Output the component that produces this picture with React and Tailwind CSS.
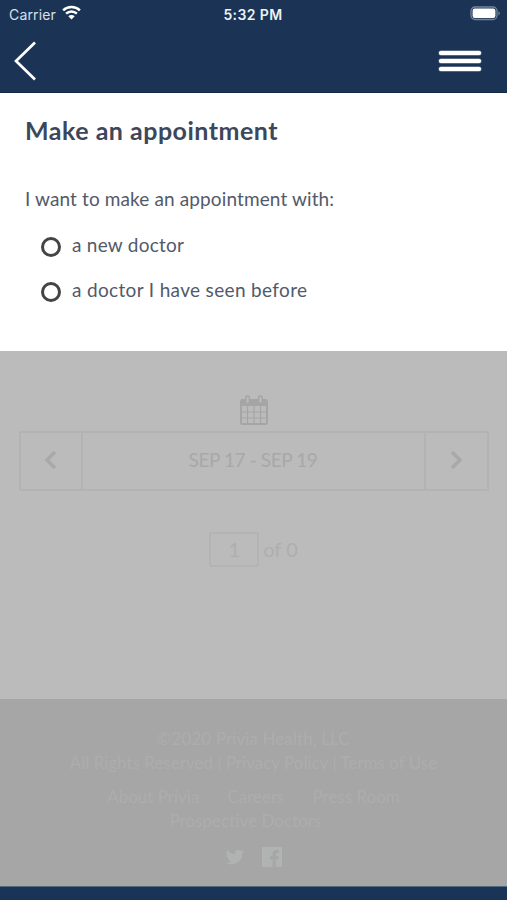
import React from "react";

function StatusBar() {
  return (
    <div className="flex h-7 items-center justify-between pl-[9px] pr-[6px] font-['Inter',sans-serif] text-white">
      <div className="flex w-[176px] items-center gap-[6px] text-[14px] text-[#d9e0ea]">
        <span className="tracking-[0.15px]">Carrier</span>
        <svg className="-mt-[3px]" width="19" height="15" viewBox="0 0 19 15" fill="none" stroke="#fff" strokeWidth="2.5">
          <path d="M1.1 5.4a12.2 12.2 0 0 1 16.8 0" />
          <path d="M4.1 8.6a7.8 7.8 0 0 1 10.8 0" />
          <path d="M6.3 11.3a4.6 4.6 0 0 1 6.4 0L9.5 14.6Z" fill="#fff" stroke="none" />
        </svg>
      </div>
      <span className="text-[14px] font-semibold tracking-[0.4px] text-[#edf1f6]">5:32 PM</span>
      <div className="flex w-[180px] justify-end">
        <svg width="31" height="16" viewBox="0 0 31 16">
          <rect x="1" y="1" width="26" height="12.5" rx="4" fill="none" stroke="#74839b" strokeWidth="1.3" />
          <rect x="2.6" y="2.6" width="22.8" height="9.4" rx="2.2" fill="#fff" />
          <path d="M28.4 5.2c2 .8 2 3.4 0 4.2z" fill="#74839b" />
        </svg>
      </div>
    </div>
  );
}

function Option({ label, className }) {
  return (
    <div className="flex h-[45px] items-center">
      <span className="mt-[2px] h-5 w-5 rounded-full border-[3px] border-[#464343]" />
      <span className={"ml-[11px] whitespace-nowrap text-[19px] " + className}>{label}</span>
    </div>
  );
}

function Calendar() {
  return (
    <svg width="28" height="30" viewBox="0 0 28 30" fill="none" stroke="#a5a5a5">
      <rect x="1" y="5" width="26" height="24" rx="1.5" strokeWidth="2" />
      <path d="M1 5h26v6H1z" fill="#a5a5a5" stroke="none" />
      <path d="M1 17h26M1 23h26M7.5 11v18M14 11v18M20.5 11v18" strokeWidth="1.2" />
      <rect x="5.8" y="1" width="3.6" height="7.5" rx="1.8" fill="#bbb" strokeWidth="1.5" />
      <rect x="18.6" y="1" width="3.6" height="7.5" rx="1.8" fill="#bbb" strokeWidth="1.5" />
    </svg>
  );
}

export default function App() {
  return (
    <div className="flex h-[900px] w-[507px] flex-col overflow-hidden bg-[#1b3455] font-['Lato',sans-serif]">
      <header className="h-[93px] shrink-0 border-b border-[#142947]">
        <StatusBar />
        <div className="flex h-16 items-start justify-between pl-[14px] pr-[26px]">
          <svg className="mt-[13px]" width="23" height="40" viewBox="0 0 23 40" fill="none" stroke="#fff" strokeWidth="2.7">
            <path d="M21 1.5 2 20l19 18.5" />
          </svg>
          <div className="mt-[23px] flex w-[42px] flex-col gap-[4px]">
            <span className="h-[4px] rounded-[2px] bg-white ring-[0.5px] ring-white/50" />
            <span className="h-[4px] rounded-[2px] bg-white ring-[0.5px] ring-white/50" />
            <span className="h-[4px] rounded-[2px] bg-white ring-[0.5px] ring-white/50" />
          </div>
        </div>
      </header>

      <main className="h-[258px] shrink-0 bg-white px-[25px] pt-[19px] text-[#525a6a]">
        <h1 className="h-9 whitespace-nowrap text-[25px] font-bold leading-9 tracking-[0.5px] text-[#3d475c]">Make an appointment</h1>
        <p className="mt-[37px] h-7 whitespace-nowrap text-[19px] leading-7 tracking-[0.12px]">I want to make an appointment with:</p>
        <div className="ml-[16px] mt-[10px]">
          <Option label="a new doctor" className="tracking-[0.25px]" />
          <Option label="a doctor I have seen before" className="tracking-[0.34px]" />
        </div>
      </main>

      <section className="flex h-[348px] shrink-0 flex-col items-center bg-[#bbbbbb] pt-[44px] text-[#aeaeae]">
        <Calendar />
        <div className="mt-[6px] flex h-[60px] w-[470px] border-2 border-[#b3b3b3]">
          <div className="flex w-[62px] items-center justify-center border-r-2 border-[#b3b3b3] pb-[3px]">
            <svg width="12" height="18" viewBox="0 0 12 18" fill="none" stroke="#a9a9a9" strokeWidth="3.5"><path d="m10 1-8 8 8 8" /></svg>
          </div>
          <div className="flex flex-1 items-center justify-center whitespace-nowrap pb-[2px] text-[19px] tracking-[-0.4px] text-[#a8a8a8]">SEP 17 - SEP 19</div>
          <div className="flex w-[63px] items-center justify-center border-l-2 border-[#b3b3b3] pb-[3px]">
            <svg width="12" height="18" viewBox="0 0 12 18" fill="none" stroke="#a9a9a9" strokeWidth="3.5"><path d="m2 1 8 8-8 8" /></svg>
          </div>
        </div>
        <div className="mt-[40px] flex h-9 items-center gap-1 text-[20px]">
          <span className="flex h-[35px] w-[50px] items-center justify-center rounded-[2px] border-2 border-[#b4b4b4]">1</span>
          <span>of 0</span>
        </div>
      </section>

      <footer className="flex h-[187px] shrink-0 flex-col items-center bg-[#a6a6a6] pt-[28px] text-[17px] leading-[23.5px] text-[#adadad]">
        <div className="whitespace-nowrap tracking-[0.1px]">©2020 Privia Health, LLC</div>
        <div className="whitespace-nowrap">All Rights Reserved | Privacy Policy | Terms of Use</div>
        <div className="mt-[11px] flex gap-[28px] whitespace-nowrap"><span>About Privia</span><span>Careers</span><span>Press Room</span></div>
        <div className="mr-[16px] whitespace-nowrap">Prospective Doctors</div>
        <div className="mt-[15px] flex items-center gap-[18px] text-[#b1b3b3]">
          <svg width="18" height="18" viewBox="0 0 24 24" fill="currentColor">
            <path d="M23.9 4.6c-.9.4-1.8.7-2.8.8a4.9 4.9 0 0 0 2.1-2.7 9.8 9.8 0 0 1-3.1 1.2A4.9 4.9 0 0 0 11.7 8 14 14 0 0 1 1.6 3.1a4.9 4.9 0 0 0 1.6 6.6A4.9 4.9 0 0 1 .9 9.1v.1a4.9 4.9 0 0 0 4 4.8 4.9 4.9 0 0 1-2.2.1 4.9 4.9 0 0 0 4.6 3.4A9.9 9.9 0 0 1 0 19.5a14 14 0 0 0 21.5-12.4 10 10 0 0 0 2.4-2.5Z" />
          </svg>
          <svg width="20" height="20" viewBox="0 0 20 20" fill="currentColor">
            <path d="M0 0h20v20h-6.2v-7.7h2.7l.4-3.1h-3.1V7.3c0-.9.3-1.5 1.6-1.5H17V3.1a20 20 0 0 0-2.4-.1c-2.4 0-4 1.4-4 4v2.2H8v3.1h2.6V20H0Z" />
          </svg>
        </div>
      </footer>
      <div className="flex-1 border-t border-[#526b7e] bg-[#193456]" />
    </div>
  );
}
